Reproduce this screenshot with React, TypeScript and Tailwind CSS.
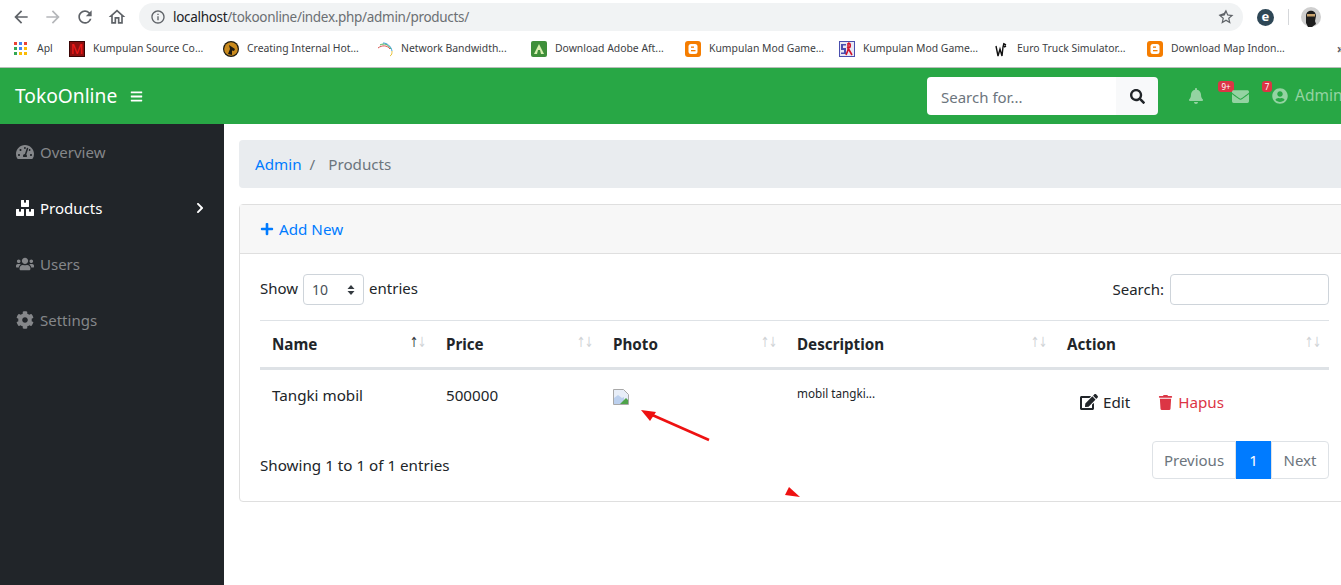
import React from "react";
import {
  FaTachometerAlt, FaBoxes, FaUsers, FaCog, FaChevronRight, FaPlus, FaEdit, FaTrash,
  FaBell, FaEnvelope, FaUserCircle, FaSearch, FaBars,
} from "react-icons/fa";

const Mat = ({ d, className }: { d: string; className?: string }) => (
  <svg viewBox="0 0 24 24" className={className} fill="currentColor"><path d={d} /></svg>
);

const AppsIcon = () => {
  const c = ["#ea4335", "#4285f4", "#ea4335", "#34a853", "#4285f4", "#fbbc05", "#34a853", "#fbbc05", "#fbbc05"];
  return (
    <div className="grid grid-cols-3 gap-[2px] w-[13px] h-[13px]">
      {c.map((x, i) => <span key={i} style={{ background: x }} className="w-[3px] h-[3px]" />)}
    </div>
  );
};
const MIcon = () => (
  <div className="w-4 h-4 bg-[#8e0f0f] border border-[#3a0505] text-[#f01a1a] text-[15px] leading-[14px] text-center font-['Liberation_Sans',sans-serif]">M</div>
);
const WolfIcon = () => (
  <svg viewBox="0 0 16 16" className="w-4 h-4"><circle cx="8" cy="8" r="8" fill="#1d1a12" /><circle cx="8" cy="8" r="6.8" fill="#c98a1e" /><path d="M5 13 7 8 6 4l3 2 3 2-1 2-2-.5L9 14z" fill="#1d1a12" /></svg>
);
const ArcIcon = () => (
  <svg viewBox="0 0 16 16" className="w-4 h-4" fill="none" strokeWidth="1"><path d="M1 7c4-3 9-3 12 1" stroke="#d9534f" /><path d="M3 4c4-2 8-1 11 4" stroke="#4caf50" /><path d="M6 2c4 0 8 3 9 8" stroke="#3f9fd8" /><path d="M13 15c2-1 2-3 2-5" stroke="#e8c33a" /></svg>
);
const TentIcon = () => (
  <svg viewBox="0 0 16 16" className="w-4 h-4"><rect width="16" height="16" rx="2" fill="#3f8f3a" /><path d="M8 3 13 13H3z" fill="#d8f0b0" /><path d="M7 9h2l1 4H6z" fill="#3f8f3a" /></svg>
);
const BloggerIcon = () => (
  <svg viewBox="0 0 16 16" className="w-4 h-4"><rect width="16" height="16" rx="3" fill="#f57d00" /><rect x="3.5" y="3" width="9" height="10" rx="2.5" fill="#fff" /><rect x="6" y="5.5" width="3" height="1.3" fill="#f57d00" /><rect x="6" y="9" width="4.5" height="1.3" fill="#f57d00" /></svg>
);
const SrIcon = () => (
  <svg viewBox="0 0 16 16" className="w-4 h-4"><rect width="16" height="16" fill="#4a4fae" /><rect x="1" y="1" width="14" height="14" fill="#e8e8f4" /><path d="M2 3h5v1.5H4V7h3v6H2v-1.5h3V9H2z" fill="#4a4fae" /><path d="M9 2c3 0 3 5 0 5l4 7M9 2v7l-2 5" stroke="#d0142c" strokeWidth="1.6" fill="none" /></svg>
);
const WIcon = () => (
  <svg viewBox="0 0 16 16" className="w-4 h-4" fill="none" stroke="#111" strokeWidth="1.4"><path d="M3 5l2 10 2-7 2 7 1-9 1-4M11 3l2 1M11 6l2-1" /></svg>
);

const bookmarks = [
  { icon: <MIcon />, text: "Kumpulan Source Co..." },
  { icon: <WolfIcon />, text: "Creating Internal Hot..." },
  { icon: <ArcIcon />, text: "Network Bandwidth..." },
  { icon: <TentIcon />, text: "Download Adobe Aft..." },
  { icon: <BloggerIcon />, text: "Kumpulan Mod Game..." },
  { icon: <SrIcon />, text: "Kumpulan Mod Game..." },
  { icon: <WIcon />, text: "Euro Truck Simulator..." },
  { icon: <BloggerIcon />, text: "Download Map Indon..." },
];

const SortArrows = ({ active }: { active?: boolean }) => (
  <span className="absolute right-[6px] top-[11px] text-[14px] leading-[20px] tracking-[-1px] font-['DejaVu_Sans',sans-serif] font-normal scale-x-75">
    <span className={active ? "text-[#343a40]" : "text-[#d0d3d6]"}>↑</span>
    <span className="text-[#d0d3d6]">↓</span>
  </span>
);

const Th = ({ w, children, active }: { w: string; children: React.ReactNode; active?: boolean }) => (
  <th className={`${w} relative text-left font-bold px-[12px] h-[48px] text-[#212529]`}>
    {children}
    <SortArrows active={active} />
  </th>
);

const NavItem = ({ icon, label, active, chevron }: { icon: React.ReactNode; label: string; active?: boolean; chevron?: boolean }) => (
  <div className={`h-[56px] flex items-center pl-[16px] pr-[18px] ${active ? "text-white" : "text-[#85878a]"}`}>
    <span className="w-[24px] flex text-[18px]">{icon}</span>
    <span className="text-[15px]">{label}</span>
    {chevron && <FaChevronRight className="ml-auto text-[12px]" />}
  </div>
);

export default function App() {
  return (
    <div className="w-[1341px] h-[585px] overflow-hidden bg-white flex flex-col text-[#212529] font-['Noto_Sans',sans-serif] text-[15.2px]">
      {/* browser toolbar */}
      <div className="h-[31px] flex items-center pt-[3px] pl-[11px] shrink-0">
        <Mat className="w-[20px] h-[20px] text-[#5f6368]" d="M20 11H7.83l5.59-5.59L12 4l-8 8 8 8 1.41-1.41L7.83 13H20v-2z" />
        <Mat className="w-[20px] h-[20px] text-[#b5b7ba] ml-[12px]" d="M12 4l-1.41 1.41L16.17 11H4v2h12.17l-5.58 5.59L12 20l8-8z" />
        <Mat className="w-[20px] h-[20px] text-[#5f6368] ml-[12px]" d="M17.65 6.35A7.958 7.958 0 0 0 12 4c-4.42 0-7.99 3.58-7.99 8s3.57 8 7.99 8c3.73 0 6.84-2.55 7.73-6h-2.08A5.99 5.99 0 0 1 12 18c-3.31 0-6-2.69-6-6s2.69-6 6-6c1.66 0 3.14.69 4.22 1.78L13 11h7V4l-2.35 2.35z" />
        <Mat className="w-[20px] h-[20px] text-[#5f6368] ml-[12px]" d="M12 5.69l5 4.5V18h-2v-6H9v6H7v-7.81l5-4.5M12 3L2 12h3v8h6v-6h2v6h6v-8h3L12 3z" />
        <div className="ml-[12px] w-[1104px] h-[28px] rounded-full bg-[#f1f3f4] flex items-center pl-[11px] pr-[8px]">
          <Mat className="w-[16px] h-[16px] text-[#5f6368]" d="M11 7h2v2h-2zm0 4h2v6h-2zm1-9C6.48 2 2 6.48 2 12s4.48 10 10 10 10-4.48 10-10S17.52 2 12 2zm0 18c-4.41 0-8-3.59-8-8s3.59-8 8-8 8 3.59 8 8-3.59 8-8 8z" />
          <span className="ml-[7px] text-[13.5px] tracking-[-0.3px] text-[#202124]">localhost<span className="text-[#6b6f73]">/tokoonline/index.php/admin/products/</span></span>
          <Mat className="ml-auto w-[18px] h-[18px] text-[#5f6368]" d="M22 9.24l-7.19-.62L12 2 9.19 6.63 2 9.24l5.46 4.73L5.82 21 12 17.27 18.18 21l-1.63-7.03L22 9.24zM12 15.4l-3.76 2.27 1-4.28-3.32-2.88 4.38-.38L12 6.1l1.71 4.04 4.38.38-3.32 2.88 1 4.28L12 15.4z" />
        </div>
        <div className="ml-[14px] w-[17px] h-[17px] rounded-full bg-[#2e4756] text-white text-[13px] leading-[15px] text-center font-bold">e</div>
        <div className="ml-[14px] w-px h-[16px] bg-[#d5d7da]" />
        <svg viewBox="0 0 20 20" className="ml-[12px] w-[20px] h-[20px]"><circle cx="10" cy="10" r="10" fill="#cfcfcf" /><path d="M5 9c0-7 10-7 10 0l-1 5 1 3-4 3H7l-2-4z" fill="#1e1e1e" /><rect x="6" y="7" width="8" height="2.5" fill="#c9a46f" /></svg>
      </div>
      {/* bookmarks */}
      <div className="h-[37px] flex items-center pl-[14px] border-b border-[#b9bdb9] shrink-0 text-[10.4px] text-[#3c4043] whitespace-nowrap">
        <div className="w-[55px] shrink-0 flex items-center"><span className="w-[23px]"><AppsIcon /></span><span>Apl</span></div>
        {bookmarks.map((b, i) => (
          <div key={i} className="w-[154px] shrink-0 flex items-center">
            <span className="w-[24px] shrink-0">{b.icon}</span>
            <span>{b.text}</span>
          </div>
        ))}
        <span className="text-[12px] text-[#5f6368] font-bold ml-[36px] shrink-0">»</span>
      </div>
      {/* navbar */}
      <div className="h-[56px] bg-[#28a745] flex items-center pl-[15px] shrink-0 whitespace-nowrap">
        <span className="text-white text-[19.2px] leading-none w-[115px]">TokoOnline</span>
        <FaBars className="text-white text-[13px]" />
        <div className="ml-auto flex h-[38px] w-[231px] rounded-[4px] overflow-hidden">
          <div className="flex-1 bg-white pl-[14px] pt-[2px] flex items-center text-[15px] text-[#6c757d]">Search for...</div>
          <div className="w-[42px] bg-[#f8f9fa] flex items-center justify-center text-[#212529]"><FaSearch className="text-[15px]" /></div>
        </div>
        <div className="w-[183px] flex items-center h-full text-[#94d3a2] overflow-hidden pl-[30px]">
          <span className="relative w-[44px] shrink-0 h-full flex items-center">
            <FaBell className="text-[16px]" />
            <span className="absolute left-[30px] top-[13px] w-[16px] h-[11px] rounded-[3px] bg-[#dc3545] text-white text-[8px] leading-[11px] text-center">9+</span>
          </span>
          <span className="relative w-[40px] shrink-0 h-full flex items-center">
            <FaEnvelope className="text-[17px]" />
            <span className="absolute left-[30px] top-[13px] w-[10px] h-[11px] rounded-[3px] bg-[#dc3545] text-white text-[8px] leading-[11px] text-center">7</span>
          </span>
          <FaUserCircle className="text-[16px] shrink-0" />
          <span className="ml-[7px] text-[15.5px]">Admin</span>
        </div>
      </div>
      {/* body */}
      <div className="flex flex-1 min-h-0">
        <aside className="w-[224px] shrink-0 bg-[#212529]">
          <NavItem icon={<FaTachometerAlt />} label="Overview" />
          <NavItem icon={<FaBoxes />} label="Products" active chevron />
          <NavItem icon={<FaUsers />} label="Users" />
          <NavItem icon={<FaCog />} label="Settings" />
        </aside>
        <main className="w-[1140px] shrink-0 pt-[16px] px-[15px]">
          <div className="h-[48px] bg-[#e9ecef] rounded-[4px] flex items-center pl-[16px] mb-[16px]">
            <span className="text-[#007bff]">Admin</span>
            <span className="text-[#6c757d] ml-[8px] mr-[13px]">/</span>
            <span className="text-[#6c757d]">Products</span>
          </div>
          <div className="border border-[#dfdfdf] rounded-[4px] bg-white">
            <div className="h-[49px] bg-[#f7f7f7] border-b border-[#dfdfdf] flex items-center pl-[20px] text-[#007bff]">
              <FaPlus className="text-[14px] mr-[5px]" />
              <span>Add New</span>
            </div>
            <div className="p-[20px] pb-[22px]">
              <div className="h-[38px] w-[1069px] mb-[8px] flex items-start justify-between text-[15px]">
                <div className="flex items-center h-[31px]">
                  <span className="pb-[2px]">Show</span>
                  <div className="mx-[5px] w-[61px] h-[31px] border border-[#ced4da] rounded-[4px] flex items-center pl-[8px] pr-[8px] text-[14px] text-[#495057]">
                    10
                    <svg viewBox="0 0 8 12" className="ml-auto w-[8px] h-[12px]" fill="#343a40"><path d="M4 1 7.5 5H.5zM4 11 .5 7h7z" /></svg>
                  </div>
                  <span className="pb-[2px]">entries</span>
                </div>
                <div className="flex items-center h-[31px]">
                  <span className="mr-[6px]">Search:</span>
                  <div className="w-[159px] h-[31px] border border-[#ced4da] rounded-[4px]" />
                </div>
              </div>
              <table className="w-[1069px] table-fixed border-collapse">
                <thead>
                  <tr className="border-t border-[#dee2e6] border-b-[3px] border-b-[#dee2e6]">
                    <Th w="w-[174px]" active>Name</Th>
                    <Th w="w-[167px]">Price</Th>
                    <Th w="w-[184px]">Photo</Th>
                    <Th w="w-[270px]">Description</Th>
                    <Th w="w-[274px]">Action</Th>
                  </tr>
                </thead>
                <tbody>
                  <tr>
                    <td className="align-top p-[12px] pt-[13px] leading-[24px]">Tangki mobil</td>
                    <td className="align-top p-[12px] pt-[13px] leading-[24px]">500000</td>
                    <td className="align-top p-[12px] pt-[19px]">
                      <svg viewBox="0 0 16 16" className="w-[16px] h-[16px] block">
                        <path d="M.5.5h10l5 5v10H.5z" fill="#e8eef8" stroke="#a8a8a8" />
                        <path d="M1 15V9l4-3 4 3 2-1 0 7z" fill="#bcd0ee" />
                        <path d="M7 15l6-6 2 2v4z" fill="#4ea34a" />
                      </svg>
                    </td>
                    <td className="align-top p-[12px] pt-[13px] text-[11.7px] leading-[20px]">mobil tangki...</td>
                    <td className="align-top px-[12px] pt-[13px] pb-[12px]">
                      <div className="h-[38px] flex items-center pl-[13px]">
                        <FaEdit className="text-[18px] mr-[5px]" />
                        <span>Edit</span>
                        <FaTrash className="ml-[28px] text-[#dc3545] text-[15px] mr-[5px]" />
                        <span className="text-[#dc3545]">Hapus</span>
                      </div>
                    </td>
                  </tr>
                </tbody>
              </table>
              <div className="mt-[8px] flex items-center justify-between w-[1069px]">
                <span className="pt-[11px]">Showing 1 to 1 of 1 entries</span>
                <div className="flex h-[38px] text-[#6c757d] text-[15px]">
                  <div className="w-[84px] border border-[#dee2e6] rounded-l-[4px] flex items-center justify-center">Previous</div>
                  <div className="w-[35px] bg-[#007bff] text-white flex items-center justify-center">1</div>
                  <div className="w-[58px] border border-[#dee2e6] rounded-r-[4px] flex items-center justify-center">Next</div>
                </div>
              </div>
            </div>
          </div>
        </main>
      </div>
      {/* annotation arrows drawn on top of the screenshot */}
      <svg className="absolute left-0 top-0 w-[1341px] h-[585px] pointer-events-none" viewBox="0 0 1341 585">
        <path d="M709 440 650 414" stroke="#ee1111" strokeWidth="2.5" />
        <path d="M641 410 656 412 650 421z" fill="#ee1111" />
        <path d="M789 487 800 497 785 495z" fill="#ee1111" />
      </svg>
    </div>
  );
}
